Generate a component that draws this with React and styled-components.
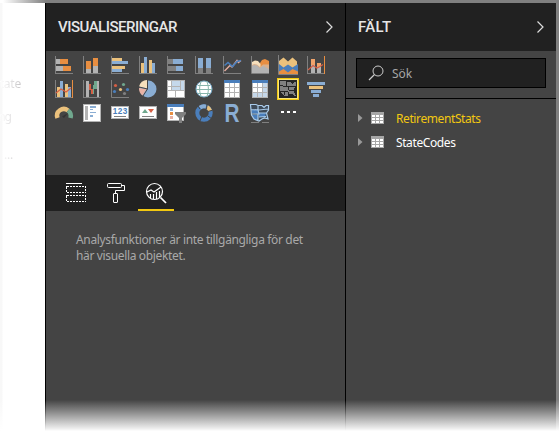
import React from "react";
import styled, { createGlobalStyle } from "styled-components";

const Global = createGlobalStyle`
  * { box-sizing: border-box; }
  html, body { margin: 0; padding: 0; background: #fff; }
  body { overflow: hidden; font-family: "Noto Sans", sans-serif; font-size: 12px; }
`;

const Shell = styled.div`
  position: relative;
  display: flex;
  flex-direction: column;
  width: 559px;
  height: 433px;
  overflow: hidden;
`;
const TopEdge = styled.div`
  height: 3px;
  flex: none;
  background: linear-gradient(90deg, #fff 3px, #808080 46px);
`;
const Columns = styled.div`
  display: flex;
  flex: 1;
  min-height: 0;
  background: #808080;
`;
const Canvas = styled.aside`
  width: 45px;
  flex: none;
  padding-top: 73px;
  background: linear-gradient(90deg, #f8f8f8 2px, #fff 3px);
  overflow: hidden;
`;
const CanvasLabel = styled.div`
  width: ${(p) => p.$width}px;
  height: ${(p) => p.$height}px;
  line-height: 16px;
  display: flex;
  justify-content: flex-end;
  white-space: nowrap;
  letter-spacing: ${(p) => p.$spacing || -0.2}px;
  color: transparent;
  background: linear-gradient(90deg, #fff, #c4c2c4 22px);
  background-clip: text;
`;
const Panel = styled.section`
  width: ${(p) => p.$width}px;
  flex: none;
  border-left: 1px solid #000;
  background: #444;
`;
const Header = styled.header`
  height: 48px;
  display: flex;
  align-items: center;
  justify-content: space-between;
  padding: 0 11px 0 12px;
  background: #212121;
`;
const Title = styled.h2`
  margin: 0;
  font: 500 15px/20px Roboto, sans-serif;
  letter-spacing: ${(p) => p.$spacing}px;
  color: #e6e6e6;
`;
const Gallery = styled.div`
  display: grid;
  grid-template-columns: repeat(10, 18px);
  grid-auto-rows: 18px;
  gap: 6px 10px;
  padding: 5px 0 0 9px;
  height: 124px;
`;
const Icon = styled.svg`
  display: block;
  width: ${(p) => p.$w || 18}px;
  height: ${(p) => p.$h || 18}px;
  overflow: visible;
`;
const Tabs = styled.nav`
  display: flex;
  height: 36px;
  padding-left: 12px;
  gap: 4px;
  background: #212121;
`;
const Tab = styled.div`
  width: 36px;
  display: flex;
  justify-content: center;
  padding-top: 7px;
  border-bottom: 2px solid ${(p) => (p.$active ? "#f2c811" : "transparent")};
`;
const Note = styled.p`
  margin: 21px 0 0 30px;
  width: 240px;
  line-height: 16px;
  letter-spacing: -0.35px;
  color: #a9a9a9;
`;
const SearchArea = styled.div`
  height: 48px;
  padding: 7px 10px 0;
  border-bottom: 1px solid #000;
`;
const SearchBox = styled.div`
  display: flex;
  align-items: center;
  gap: 8px;
  height: 30px;
  padding-left: 11px;
  border: 1px solid #000;
  background: #212121;
  color: #a6a6a6;
`;
const FieldList = styled.div`
  padding-top: 7px;
`;
const Field = styled.div`
  display: flex;
  align-items: center;
  height: 24px;
  padding-left: 12px;
  letter-spacing: -0.4px;
  color: ${(p) => (p.$selected ? "#f2c811" : "#fff")};
`;
const FieldName = styled.span`
  margin-left: 12px;
`;
const TableGlyph = styled(Icon)`
  margin-left: 8px;
`;
const BottomFade = styled.div`
  position: absolute;
  inset: auto 0 0 0;
  height: 33px;
  background: linear-gradient(180deg, rgba(255,255,255,0) 0, rgba(255,255,255,.92) 29px, #fff 31px);
`;

const O = "#e88e41", B = "#8aadd3", Y = "#ebc17c", G = "#808080", L = "#b3b3b3", D = "#4a7ebb", R = "#d65f44", T = "#70a88e";

const Rects = ({ items }) => items.map(([x, y, w, h, c], i) => <rect key={i} x={x} y={y} width={w} height={h} fill={c} />);
const Axis = () => <path d="M.5 0V17.5H18" fill="none" stroke={G} />;
const Bars = ({ items, children }) => (
  <Icon viewBox="0 0 18 18" shapeRendering="crispEdges">
    <Axis /><Rects items={items} />{children}
  </Icon>
);
const TableIcon = ({ matrix }) => (
  <Icon viewBox="0 0 18 18" shapeRendering="crispEdges">
    <Rects items={[[1, 0, 16, 18, L], [1, 0, 16, 3, D]]} />
    {[0, 1, 2].map((r) => [0, 1, 2].map((c) => (
      <rect key={`${r}${c}`} x={2 + c * 5} y={3 + r * 5} width="4" height="4" fill={matrix && (r === 2 || c === 2) ? "#c5d8eb" : "#fff"} />
    )))}
  </Icon>
);
const Card = ({ children }) => (
  <Icon viewBox="0 0 18 18">
    <rect x=".5" y="2.5" width="17" height="12" fill="#fff" stroke={L} />
    {children}
    <path d="M3 12.5H15" stroke={G} />
  </Icon>
);

const StackedBar = () => <Bars items={[[1,3,4,5,L],[5,3,8,5,O],[1,10,7,5,L],[8,10,8,5,O]]} />;
const StackedColumn = () => <Bars items={[[3,5,5,8,O],[3,13,5,4,L],[10,2,5,8,O],[10,10,5,7,L]]} />;
const ClusteredBar = () => <Bars items={[[1,2,10,3,Y],[1,5,16,3,B],[1,10,13,3,Y],[1,13,10,3,B]]} />;
const ClusteredColumn = () => <Bars items={[[2,7,3,10,Y],[5,1,3,16,B],[10,4,3,13,Y],[13,7,3,10,B]]} />;
const FullBar = () => <Bars items={[[1,3,5,5,G],[6,3,10,5,B],[1,10,8,5,G],[9,10,7,5,B]]} />;
const FullColumn = () => <Bars items={[[3,2,5,10,B],[3,12,5,5,G],[11,2,5,10,B],[11,12,5,5,G]]} />;
const LineChart = () => (
  <Icon viewBox="0 0 18 18"><Axis />
    <path d="M1.5 15L7 9.5L9 11L14 4.5L15.5 6.5L18 4.5" fill="none" stroke="#e5ad9f" strokeWidth="1.4" />
    <path d="M1.5 9.5L5 6.5L9.5 10.5L14 5.5L18 4.5" fill="none" stroke={D} strokeWidth="1.6" />
  </Icon>
);
const AreaChart = () => (
  <Icon viewBox="0 0 18 18">
    <path d="M1 8L8 9L9 7L11 4L14 3L18 5V17H1Z" fill={O} />
    <path d="M1 8V6L4 4.5L7 5L9.5 8V11H1Z" fill="#f5dfbc" />
    <path d="M1 9L3 8L6 8.5L9 11L12 8.5H18V17H1Z" fill="#d9af8c" />
    <path d="M1 10L3 9L6 9.5L9 12L12 10L18 13V17H1Z" fill={L} /><Axis />
  </Icon>
);
const RibbonChart = () => (
  <Icon viewBox="0 0 18 18">
    <path d="M0 18V5L4.5 1.5L9 5.5L13.5 1.5L18 5.5V18Z" fill={Y} />
    <path d="M0 18V8L4.5 11.5L9 8.5L13.5 11.5L19 8V18Z" fill={D} />
    <path d="M0 18V15.5L4.5 13L9 16.5L13.5 13L19 15.5V18Z" fill={O} />
    <path d="M-.5 -1V18.5H19" fill="none" stroke={G} />
  </Icon>
);
const LineStacked = () => (
  <Bars items={[[4,3,4,6,"#f0a36b"],[4,9,4,8,L],[10,7,4,4,"#f0a36b"],[10,11,4,6,L],[17,0,1,18,O]]}>
    <path d="M1 14L6 9.5L10 12L13 10.5L16 8.5" fill="none" stroke={R} strokeWidth="1.2" shapeRendering="auto" />
  </Bars>
);
const LineClustered = () => (
  <Bars items={[[2,7,3,10,Y],[5,1,3,16,B],[10,4,3,13,Y],[13,7,3,10,B],[17,0,1,18,O]]}>
    <path d="M1 13L6 9L11 12L16 8" fill="none" stroke={R} strokeWidth="1.2" shapeRendering="auto" />
  </Bars>
);
const Waterfall = () => <Bars items={[[3,1,3,16,L],[6,4,2,6,R],[8,9,2,5,R],[10,5,1,9,T],[11,1,3,8,T],[14,1,2,16,L]]} />;
const Scatter = () => (
  <Icon viewBox="0 0 18 18"><Axis />
    {[[4.5,5.5,R],[12.5,4.5,T],[9.5,9.5,Y],[16.5,9.5,D],[3.5,11.5,D],[13.5,13.5,G]].map(([x,y,c]) => <circle key={x} cx={x} cy={y} r="1.6" fill={c} />)}
  </Icon>
);
const Pie = () => (
  <Icon viewBox="0 0 18 18">
    <circle cx="9" cy="9" r="8.5" fill={B} />
    <path d="M8 8.5V0A9 9 0 0 0 0 6.5Z" fill="#f5dfbc" />
    <path d="M7.5 9L0 8A9 9 0 0 0 3.5 15.5Z" fill="#e9b2a4" />
    <path d="M8.5 0V9L0 7M8.5 9L4 16" fill="none" stroke="#444" />
  </Icon>
);
const Treemap = () => (
  <Icon viewBox="0 0 18 18" shapeRendering="crispEdges">
    <Rects items={[[0,0,18,18,L],[1,1,3,5,"#fff"],[5,1,8,5,"#c5d8eb"],[14,1,3,9,"#c5d8eb"],[1,7,3,3,"#fff"],[5,7,8,3,"#c5d8eb"],[1,11,7,6,"#fff"],[9,11,8,6,"#fff"]]} />
  </Icon>
);
const Globe = () => (
  <Icon viewBox="0 0 18 18">
    <circle cx="9" cy="9" r="8" fill="#fff" stroke="#75a8c5" />
    <path d="M3 5.5H15M1 9.5H17M3 13.5H15M6.5 1C4 6 4 12 6.5 17M11.5 1C14 6 14 12 11.5 17" fill="none" stroke="#88b5ab" />
  </Icon>
);
const FilledMap = () => (
  <Icon viewBox="0 0 18 18" shapeRendering="crispEdges">
    <rect x="-2" y="-2" width="22" height="22" fill="#f2c811" />
    <rect x="-1" y="-1" width="20" height="20" fill="#fbe77a" />
    <rect width="18" height="18" fill="#252525" />
    <path d="M1 1H7L9 2H12L13 4L15 2H17V6L15 8V12L17 16H15L13 14H10L8 16H6L3 14L1 11Z" fill={G} />
    <path d="M1 5.5L9 7L12 6H17M7.5 1L7 6M9.5 7V10L15 10.5M1 11H7L9 12V16M5 11L6 15" fill="none" stroke="#252525" />
  </Icon>
);
const Funnel = () => (
  <Icon viewBox="0 0 18 18" shapeRendering="crispEdges"><Rects items={[[0,2,18,3,B],[2,6,14,3,Y],[4,10,10,3,B],[6,14,6,3,B]]} /></Icon>
);
const Gauge = () => (
  <Icon viewBox="0 0 18 18">
    <path d="M2.5 14A6.7 6.7 0 0 1 13 6.5" fill="none" stroke={Y} strokeWidth="4.5" />
    <path d="M13 6.5A7 7 0 0 1 15.5 14" fill="none" stroke={T} strokeWidth="4.5" />
    <path d="M7 12.5L13 9L9 14Z" fill="#333" />
  </Icon>
);
const MultiCard = () => (
  <Icon viewBox="0 0 18 18" shapeRendering="crispEdges"><Rects items={[[0,0,18,18,L],[1,1,16,16,"#fff"],[2,2,3,14,L],[7,2,6,2,B],[7,5,3,1,B],[7,8,6,1,B],[7,11,3,2,B]]} /></Icon>
);
const NumberCard = () => <Card><text x="1.7" y="10" fontFamily="Liberation Sans" fontWeight="700" fontSize="8.2" textLength="14.5" fill={D}>123</text></Card>;
const Kpi = () => <Card><path d="M3 9L6 5L9 9Z" fill={T} /><path d="M9 5H15L12 9Z" fill={R} /></Card>;
const Slicer = () => (
  <Icon viewBox="0 0 18 18">
    <Rects items={[[0,0,17,17,L],[0,0,17,3,D],[1,3,15,13,"#fff"],[3,4,3,3,B],[3,8,3,3,O],[3,12,3,3,"#e9b2a4"]]} />
    <path d="M8 8H19V10L15 14V19H12V14L8 10Z" fill={G} />
  </Icon>
);
const Donut = () => (
  <Icon viewBox="0 0 18 18">
    <circle cx="9" cy="9" r="6.7" fill="none" stroke={D} strokeWidth="4" />
    <path d="M5 3.7A6.7 6.7 0 0 1 11 2.6" fill="none" stroke={B} strokeWidth="4" />
    <path d="M12 3A6.7 6.7 0 0 1 15.4 7" fill="none" stroke={Y} strokeWidth="4" />
    <path d="M5 5L3 2M11.5 5L12 0M13 7.5L18 6M13 12L17 15M7 12L5 17" stroke="#444" />
  </Icon>
);
const RScript = () => <Icon viewBox="0 0 18 18"><text x="1.5" y="17.5" fontFamily="Liberation Sans" fontWeight="700" fontSize="25" textLength="15" lengthAdjust="spacingAndGlyphs" fill={B}>R</text></Icon>;
const ShapeMap = () => (
  <Icon viewBox="0 0 18 18">
    <path d="M-.5 .5H5L7 1.5H11L13 3.5L15 1.5H17.5V6L15.5 9L17 15L13.5 14L11 15L8 17L3 15L.5 11Z" fill="#3d4a58" />
    <path d="M1 11H7V16L3 15ZM8 9H15L14 13H8ZM1 6H7V10L1 9Z" fill={D} />
    <path d="M-.5 .5H5L7 1.5H11L13 3.5L15 1.5H17.5V6L15.5 9L17 15L13.5 14L11 15L8 17L3 15L.5 11ZM0 5.5L8 6L17 5M7 1.5V6L8 10H1M8 9H15.5M7 10V16M8 13L15 12.5" fill="none" stroke="#a9cbea" strokeWidth="1.2" />
    <path d="M0 18.5H8M11 18.5H18" stroke={G} />
  </Icon>
);
const More = () => (
  <Icon viewBox="0 0 18 18" shapeRendering="crispEdges"><Rects items={[[2,7,3,2,"#fff"],[8,7,3,2,"#fff"],[14,7,3,2,"#fff"]]} /></Icon>
);
const visuals = [StackedBar, StackedColumn, ClusteredBar, ClusteredColumn, FullBar, FullColumn, LineChart, AreaChart, RibbonChart, LineStacked,
  LineClustered, Waterfall, Scatter, Pie, Treemap, Globe, TableIcon, () => <TableIcon matrix />, FilledMap, Funnel,
  Gauge, MultiCard, NumberCard, Kpi, Slicer, Donut, RScript, ShapeMap, More];

const Chevron = () => <Icon $w={8} $h={12} viewBox="0 0 8 12"><path d="M.5 .5L6 6L.5 11.5" fill="none" stroke="#ddd" strokeWidth="1.2" /></Icon>;

const FieldsIcon = () => (
  <Icon $w={20} $h={20} viewBox="0 0 20 20" fill="none" stroke="#fff" shapeRendering="crispEdges">
    <path d="M0 1.5H16" /><rect x=".5" y="4.5" width="19" height="6" strokeDasharray="2 1" /><rect x=".5" y="13.5" width="19" height="6" strokeDasharray="2 1" />
  </Icon>
);
const RollerIcon = () => (
  <Icon $w={20} $h={20} viewBox="0 0 20 20" fill="none" stroke="#fff">
    <rect x="1.5" y="1.5" width="14" height="4" rx="1" /><path d="M15.5 3.5H18.5V8.5H9.5V11.5" /><rect x="7.5" y="11.5" width="4" height="9" rx=".5" />
  </Icon>
);
const AnalyticsIcon = () => (
  <Icon $w={20} $h={20} viewBox="0 0 20 20" fill="none" stroke="#fff">
    <circle cx="8.5" cy="9.5" r="8" strokeWidth="1.2" /><path d="M14.5 15.5L20 21" strokeWidth="1.7" />
    <path d="M1 10L5 8L8 10L15 5" strokeWidth="1.2" /><path d="M4.5 12V16M7.5 12V17M10.5 10V17M13.5 9V15" strokeWidth="1.2" />
  </Icon>
);

const FieldRow = ({ name, selected }) => (
  <Field $selected={selected}>
    <Icon $w={5} $h={8} viewBox="0 0 5 8"><path d="M0 0L4.5 4L0 8Z" fill="#999" /></Icon>
    <TableGlyph $w={13} $h={12} viewBox="0 0 13 12" shapeRendering="crispEdges">
      <rect width="13" height="12" fill="#a6a6a6" />
      {[0, 1, 2].map((r) => [0, 1, 2].map((c) => <rect key={`${r}${c}`} x={1 + c * 4} y={3 + r * 3} width="3" height="2" fill="#fff" />))}
    </TableGlyph>
    <FieldName>{name}</FieldName>
  </Field>
);

export default function App() {
  return (
    <>
      <Global />
      <Shell>
        <TopEdge />
        <Columns>
          <Canvas>
            <CanvasLabel $width={21} $height={33}>tate</CanvasLabel>
            <CanvasLabel $width={11} $height={38} $spacing={-1}>ng</CanvasLabel>
            <CanvasLabel $width={13} $height={16}>...</CanvasLabel>
          </Canvas>
          <Panel $width={300}>
            <Header><Title $spacing={-0.5}>VISUALISERINGAR</Title><Chevron /></Header>
            <Gallery>{visuals.map((V, i) => <V key={i} />)}</Gallery>
            <Tabs>
              <Tab><FieldsIcon /></Tab>
              <Tab><RollerIcon /></Tab>
              <Tab $active><AnalyticsIcon /></Tab>
            </Tabs>
            <Note>Analysfunktioner är inte tillgängliga för det här visuella objektet.</Note>
          </Panel>
          <Panel $width={211}>
            <Header><Title $spacing={0.3}>FÄLT</Title><Chevron /></Header>
            <SearchArea>
              <SearchBox>
                <Icon $w={16} $h={16} viewBox="0 0 16 16" fill="none" stroke="#ccc"><circle cx="10" cy="6" r="5" /><path d="M6.5 9.5L1 15" strokeWidth="1.2" /></Icon>
                Sök
              </SearchBox>
            </SearchArea>
            <FieldList>
              <FieldRow name="RetirementStats" selected />
              <FieldRow name="StateCodes" />
            </FieldList>
          </Panel>
        </Columns>
        <BottomFade />
      </Shell>
    </>
  );
}
